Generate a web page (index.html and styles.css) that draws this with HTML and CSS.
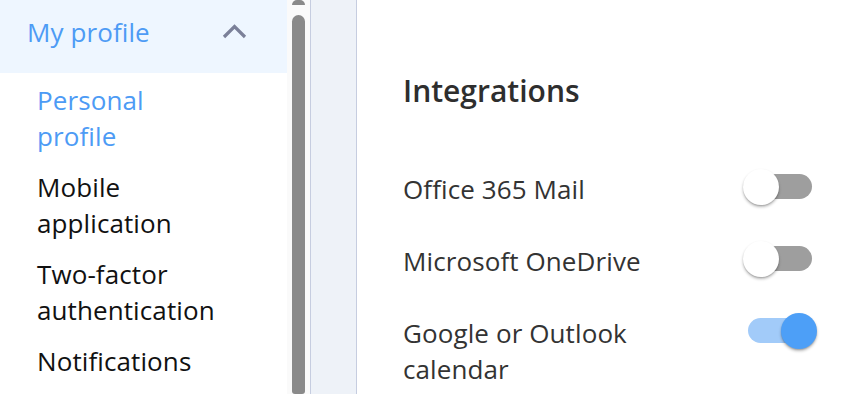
FILE: index.html
```html
<!DOCTYPE html>
<html lang="en">
<head>
<meta charset="utf-8">
<title>My profile – Integrations</title>
<link rel="stylesheet" href="styles.css">
</head>
<body>
<div class="app">
  <aside class="sidebar">
    <nav class="nav">
      <div class="nav-head">
        <span class="nav-title">My profile</span>
        <svg class="chevron" width="25" height="16" viewBox="0 0 25 16" aria-hidden="true">
          <polyline points="2,14 12.5,3.5 23,14" fill="none" stroke="#7b8099" stroke-width="3.2" stroke-linecap="butt" stroke-linejoin="miter"/>
        </svg>
      </div>
      <ul class="nav-list">
        <li class="nav-item active">Personal profile</li>
        <li class="nav-item">Mobile application</li>
        <li class="nav-item">Two-factor authentication</li>
        <li class="nav-item">Notifications</li>
      </ul>
    </nav>
    <div class="scrollbar">
      <div class="sb-cap"></div>
      <div class="sb-thumb"></div>
    </div>
  </aside>
  <div class="rail"></div>
  <main class="content">
    <h2 class="title">Integrations</h2>
    <div class="row">
      <span class="label">Office 365 Mail</span>
      <span class="toggle"><span class="knob"></span></span>
    </div>
    <div class="row">
      <span class="label">Microsoft OneDrive</span>
      <span class="toggle"><span class="knob"></span></span>
    </div>
    <div class="row">
      <span class="label">Google or Outlook calendar</span>
      <span class="toggle on"><span class="knob"></span></span>
    </div>
  </main>
</div>
</body>
</html>
```
FILE: styles.css
```css
* { box-sizing: border-box; }
html, body {
  margin: 0;
  padding: 0;
  background: #ffffff;
  font-family: "Open Sans", "Liberation Sans", sans-serif;
  overflow: hidden;
}
.app {
  display: flex;
  width: 846px;
  height: 394px;
}
.sidebar {
  display: flex;
  width: 310px;
  flex: none;
}
.nav {
  width: 287px;
  flex: none;
}
.nav-head {
  display: flex;
  align-items: flex-start;
  justify-content: space-between;
  height: 73px;
  padding: 14px 40px 0 27px;
  background: #eef6ff;
}
.nav-title {
  font-size: 26px;
  line-height: 36px;
  color: #4d9bf5;
  letter-spacing: 0.1px;
}
.chevron {
  margin-top: 9px;
  display: block;
}
.nav-list {
  list-style: none;
  margin: 0;
  padding: 9px 0 0 37px;
  display: flex;
  flex-direction: column;
  gap: 15px;
}
.nav-item {
  width: 182px;
  font-size: 26px;
  line-height: 36px;
  color: #111111;
  letter-spacing: 0.1px;
}
.nav-item.active { color: #4d9bf5; }
.scrollbar {
  width: 23px;
  background: #fafafa;
  padding: 0 5px;
  display: flex;
  flex-direction: column;
}
.sb-cap {
  height: 5px;
  background: #8a8a8a;
  border-radius: 6px 6px 0 0;
}
.sb-thumb {
  margin-top: 10px;
  flex: 1;
  background: #8a8a8a;
  border-radius: 6.5px 6.5px 3px 3px;
}
.rail {
  width: 47px;
  flex: none;
  background: #eef2f8;
  border-left: 1px solid #c6cde0;
  border-right: 1px solid #c6cde0;
}
.content {
  flex: 1;
  padding: 71px 34px 0 46px;
  color: #333333;
}
.title {
  margin: 0 0 60px;
  font-size: 30px;
  line-height: 40px;
  font-weight: 600;
  color: #2e2e2e;
}
.row {
  display: flex;
  justify-content: space-between;
  align-items: flex-start;
  margin-bottom: 36px;
}
.label {
  width: 290px;
  font-size: 26px;
  line-height: 36px;
  color: #333333;
  letter-spacing: 0.1px;
}
.toggle {
  position: relative;
  width: 64px;
  height: 25px;
  margin-top: 3px;
  border-radius: 12.5px;
  background: #9e9e9e;
  flex: none;
}
.knob {
  position: absolute;
  top: -5.5px;
  left: -5px;
  width: 36px;
  height: 36px;
  border-radius: 50%;
  background: #ffffff;
  box-shadow: 0 2px 3px rgba(0,0,0,0.28), 0 1px 1px rgba(0,0,0,0.12);
}
.toggle.on { background: #a2cbf9; }
.toggle.on .knob {
  left: auto;
  right: -5px;
  background: #4d9ff7;
}
```
